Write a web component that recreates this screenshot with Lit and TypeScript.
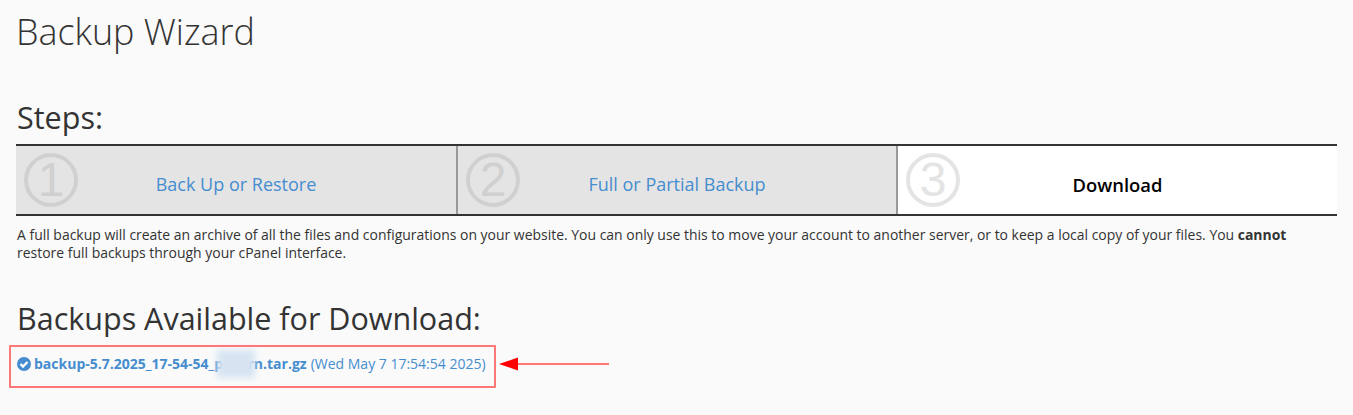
import { LitElement, html, css, svg } from "lit";
import { customElement } from "lit/decorators.js";

const steps = [
  { n: "1", label: "Back Up or Restore", active: false },
  { n: "2", label: "Full or Partial Backup", active: false },
  { n: "3", label: "Download", active: true },
];

@customElement("app-root")
export class AppRoot extends LitElement {
  static styles = css`
    :host {
      display: block;
      height: 415px;
      overflow: hidden;
      background: #fafafa;
      color: #333;
      font-family: "Open Sans", sans-serif;
      font-size: 13px;
      line-height: 18px;
      position: relative;
      padding: 0 16px;
      box-sizing: border-box;
    }
    h1 {
      margin: 0;
      padding-top: 8px;
      font-size: 35.9px;
      font-weight: 300;
      line-height: 48px;
    }
    h2 {
      margin: 0;
      font-size: 30.5px;
      font-weight: 400;
      line-height: 38px;
      padding-left: 1px;
    }
    .steps-title { margin-top: 42px; }
    .steps {
      margin-top: 8px;
      display: grid;
      grid-template-columns: 442px 440px 439px;
      border-top: 2px solid #333;
      border-bottom: 2px solid #333;
      height: 68px;
    }
    .step {
      position: relative;
      background: #e4e4e4;
      border-right: 2px solid #999;
      display: flex;
      align-items: center;
      justify-content: center;
      padding-top: 8px;
      font-size: 18px;
      color: #458dcf;
    }
    .step.active {
      background: #fff;
      border-right: 0;
      color: #000;
      font-size: 18.4px;
      font-weight: 600;
      padding-top: 9px;
    }
    .num {
      position: absolute;
      left: 8px;
      top: 7px;
      width: 54px;
      height: 54px;
      box-sizing: border-box;
      border: 4px solid #d0d0d0;
      border-radius: 50%;
      display: flex;
      align-items: center;
      justify-content: center;
      font-family: "Liberation Sans", sans-serif;
      font-size: 48px;
      line-height: 46px;
      font-weight: 400;
      color: #d0d0d0;
    }
    .step.active .num { color: #e4e4e4; border-color: #e4e4e4; }
    .desc { margin: 10px 0 0; font-size: 13.96px; line-height: 18px; padding-left: 1px; }
    .desc b { font-weight: 700; }
    .avail { margin-top: 37px; }
    .file {
      margin-top: 17px;
      padding-left: 1px;
      display: flex;
      align-items: center;
      gap: 3px;
      font-size: 14px;
      line-height: 20px;
      color: #458dcf;
    }
    .file svg { width: 14px; height: 14px; flex: none; margin-top: -1px; }
    .file b { font-weight: 700; }
    .file span { font-size: 14px; margin-left: 1px; }
    .blur {
      position: absolute;
      left: 217px;
      top: 350px;
      width: 38px;
      height: 28px;
      background: #d6e4f2;
      filter: blur(3px);
    }
    .mark {
      position: absolute;
      left: 9px;
      top: 345px;
      width: 487px;
      height: 43px;
      box-sizing: border-box;
      border: 2px solid #f77;
      border-radius: 1px;
    }
    .arrow {
      position: absolute;
      left: 498px;
      top: 354px;
      width: 112px;
      height: 20px;
    }
  `;

  render() {
    return html`
      <h1>Backup Wizard</h1>
      <h2 class="steps-title">Steps:</h2>
      <div class="steps">
        ${steps.map(
          (s) => html`<div class="step ${s.active ? "active" : ""}">
            <span class="num">${s.n}</span>${s.label}
          </div>`
        )}
      </div>
      <p class="desc">
        A full backup will create an archive of all the files and configurations on your website. You can only use this to move your account to another server, or to keep a local copy of your files. You
        <b>cannot</b> restore full backups through your cPanel interface.
      </p>
      <h2 class="avail">Backups Available for Download:</h2>
      <div class="file">
        <svg viewBox="0 0 14 14">
          <circle cx="7" cy="7" r="7" fill="#458dcf"></circle>
          ${svg`<path d="M3.500 7 6 9.500 10.500 5" fill="none" stroke="#fff" stroke-width="2.400"></path>`}
        </svg>
        <b>backup-5.7.2025_17-54-54_pxxxrn.tar.gz</b>
        <span>(Wed May 7 17:54:54 2025)</span>
      </div>
      <div class="blur"></div>
      <div class="mark"></div>
      <svg class="arrow" viewBox="0 0 112 20">
        <line x1="16" y1="10" x2="111" y2="10" stroke="#f77" stroke-width="2"></line>
        <path d="M1 10 20 3.500V16.500Z" fill="#f00"></path>
      </svg>
    `;
  }
}
